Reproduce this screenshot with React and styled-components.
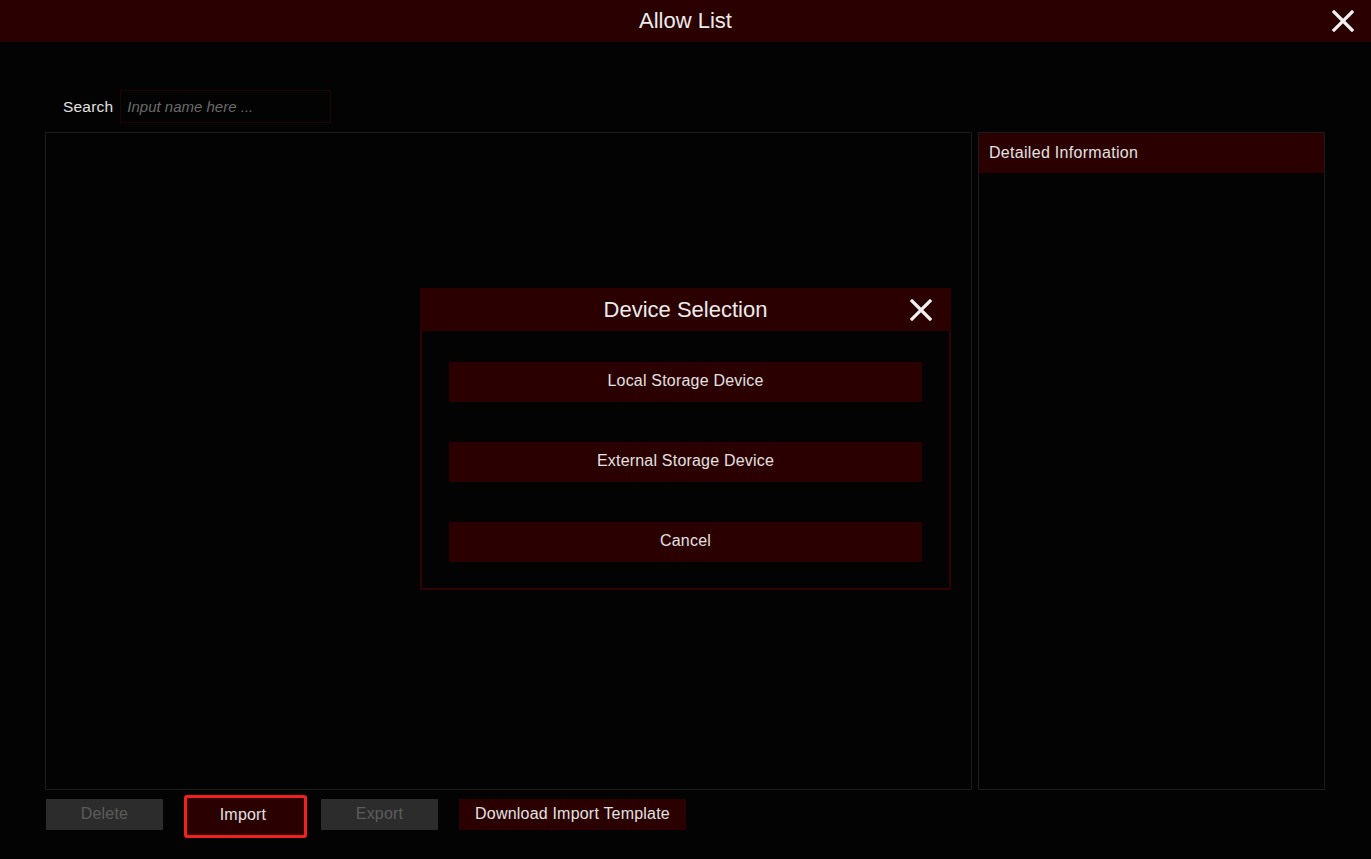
import React from "react";
import styled, { createGlobalStyle } from "styled-components";

const Global = createGlobalStyle`
  html, body { margin: 0; padding: 0; background: #030303; }
  body { font-family: "Liberation Sans", Arial, sans-serif; color: #e2e2e2; }
  * { box-sizing: border-box; }
`;

const Page = styled.div`
  position: relative;
  width: 1371px;
  height: 859px;
  background: #030303;
  display: flex;
  flex-direction: column;
  overflow: hidden;
`;

const TitleBar = styled.header`
  height: 42px;
  flex: 0 0 42px;
  background: #2a0000;
  display: flex;
  align-items: center;
  justify-content: center;
  position: relative;
`;

const Title = styled.h1`
  margin: 0;
  font-size: 22px;
  font-weight: 400;
  color: #ececec;
`;

const CloseBtn = styled.button`
  position: absolute;
  right: ${(p) => p.$right}px;
  top: 50%;
  transform: translateY(-50%);
  width: 24px;
  height: 24px;
  padding: 0;
  border: 0;
  background: transparent;
  display: flex;
  align-items: center;
  justify-content: center;
  cursor: pointer;
`;

const Body = styled.main`
  flex: 1;
  display: flex;
  flex-direction: column;
  padding: 48px 45px 0 45px;
`;

const SearchRow = styled.div`
  display: flex;
  align-items: center;
  gap: 7px;
  padding-left: 18px;
  height: 33px;
`;

const Label = styled.span`
  font-size: 15.5px;
  letter-spacing: 0.2px;
  color: #e2e2e2;
`;

const SearchInput = styled.input`
  width: 211px;
  height: 33px;
  background: #030303;
  border: 1px solid #1e0404;
  color: #ddd;
  font-family: "Liberation Sans", Arial, sans-serif;
  font-size: 15px;
  padding: 0 6px;
  outline: none;
  &::placeholder { color: #6a6a6a; font-style: italic; }
`;

const Panels = styled.div`
  display: flex;
  gap: 6px;
  margin-top: 9px;
  height: 658px;
`;

const ListPanel = styled.section`
  width: 927px;
  border: 1px solid #1c1c1c;
  background: #030303;
`;

const InfoPanel = styled.section`
  width: 347px;
  border: 1px solid #1c1c1c;
  display: flex;
  flex-direction: column;
`;

const InfoHeader = styled.div`
  height: 40px;
  background: #2a0000;
  display: flex;
  align-items: center;
  padding-left: 10px;
  font-size: 16px;
  letter-spacing: 0.3px;
  color: #e2e2e2;
`;

const ButtonRow = styled.div`
  display: flex;
  align-items: center;
  margin-top: 1px;
  height: 47px;
  padding-left: 1px;
`;

const ActionButton = styled.button`
  height: ${(p) => (p.$highlight ? 43 : 31)}px;
  width: ${(p) => p.$w}px;
  margin-left: ${(p) => p.$ml || 0}px;
  margin-top: ${(p) => (p.$highlight ? 3 : 0)}px;
  padding: 0 ${(p) => (p.$highlight ? 5 : 0)}px ${(p) => (p.$highlight ? 3 : 1)}px 0;
  font-family: "Liberation Sans", Arial, sans-serif;
  font-size: 16px;
  letter-spacing: 0.2px;
  background: ${(p) => (p.$disabled ? "#2c2c2c" : "#2a0000")};
  color: ${(p) => (p.$disabled ? "#5c5c5c" : "#e2e2e2")};
  border: ${(p) => (p.$highlight ? "3px solid #f0201c" : "0")};
  border-radius: ${(p) => (p.$highlight ? "3px" : "0")};
  cursor: pointer;
`;

const Dialog = styled.div`
  position: absolute;
  left: 420px;
  top: 288px;
  width: 531px;
  height: 302px;
  background: #030303;
  border: 2px solid #2f0303;
  display: flex;
  flex-direction: column;
`;

const DialogHeader = styled.div`
  height: 43px;
  background: #2a0000;
  display: flex;
  align-items: center;
  justify-content: center;
  position: relative;
  margin: -2px -2px 0 -2px;
`;

const DialogTitle = styled.h2`
  margin: 0;
  font-size: 22px;
  font-weight: 400;
  color: #ececec;
`;

const DialogBody = styled.div`
  display: flex;
  flex-direction: column;
  gap: 40px;
  padding: 31px 27px 0 27px;
`;

const DialogButton = styled.button`
  height: 40px;
  width: 100%;
  padding: 0 0 3px 0;
  background: #2a0000;
  border: 0;
  color: #e2e2e2;
  font-family: "Liberation Sans", Arial, sans-serif;
  font-size: 16px;
  letter-spacing: 0.2px;
  cursor: pointer;
`;

const XIcon = ({ size = 22 }) => (
  <svg width={size} height={size} viewBox="0 0 22 22">
    <path d="M2 2 L20 20 M20 2 L2 20" stroke="#f0f0f0" strokeWidth="3.2" strokeLinecap="square" />
  </svg>
);

export default function App() {
  return (
    <Page>
      <Global />
      <TitleBar>
        <Title>Allow List</Title>
        <CloseBtn $right={16} aria-label="close"><XIcon /></CloseBtn>
      </TitleBar>
      <Body>
        <SearchRow>
          <Label>Search</Label>
          <SearchInput placeholder="Input name here ..." />
        </SearchRow>
        <Panels>
          <ListPanel />
          <InfoPanel>
            <InfoHeader>Detailed Information</InfoHeader>
          </InfoPanel>
        </Panels>
        <ButtonRow>
          <ActionButton $w={117} $disabled>Delete</ActionButton>
          <ActionButton $w={123} $ml={21} $highlight>Import</ActionButton>
          <ActionButton $w={117} $ml={14} $disabled>Export</ActionButton>
          <ActionButton $w={227} $ml={21}>Download Import Template</ActionButton>
        </ButtonRow>
      </Body>
      <Dialog>
        <DialogHeader>
          <DialogTitle>Device Selection</DialogTitle>
          <CloseBtn $right={18} aria-label="close"><XIcon /></CloseBtn>
        </DialogHeader>
        <DialogBody>
          <DialogButton>Local Storage Device</DialogButton>
          <DialogButton>External Storage Device</DialogButton>
          <DialogButton>Cancel</DialogButton>
        </DialogBody>
      </Dialog>
    </Page>
  );
}
